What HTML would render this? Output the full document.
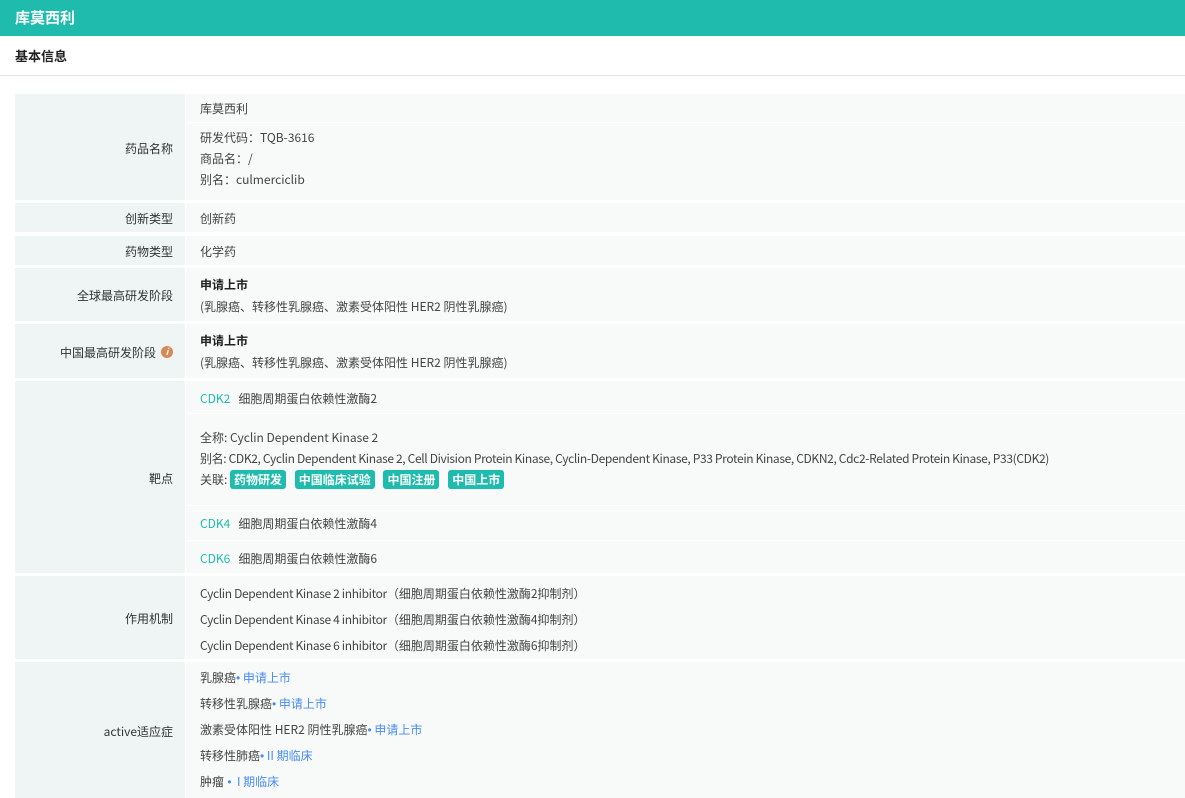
<!DOCTYPE html>
<html><head><meta charset="utf-8"><style>
*{margin:0;padding:0;box-sizing:border-box}
body{width:1185px;height:798px;overflow:hidden;background:#fff;font-family:"Noto Sans CJK SC","Liberation Sans",sans-serif;font-size:12px;color:#444;position:relative}
.top{position:absolute;left:0;top:0;width:1185px;height:36px;background:#1fbcae;color:#fff;font-weight:bold;font-size:15px;line-height:36px;padding-left:15px}
.sec{position:absolute;left:0;top:36px;width:1185px;height:40px;border-bottom:1px solid #e6e6e6;font-weight:bold;font-size:13px;color:#222;line-height:40px;padding-left:15px}
.l{position:absolute;left:15px;width:170px;background:#eef5f4;text-align:right;padding-right:12px;color:#333;display:flex;align-items:center;justify-content:flex-end;padding-top:2px}
.v{position:absolute;left:186px;width:999px;background:#f8fafa}
.t{position:absolute;left:200px;white-space:nowrap;line-height:16px}
.line{position:absolute;left:186px;width:999px;height:1px;background:#fff}
.c{color:#1fbcae}
.b{color:#4a8cf0}
.d{font-family:"Liberation Sans",sans-serif;color:#4a8cf0}
.n{letter-spacing:-0.35px}
.tag{display:inline-block;background:#1fbcae;color:#fff;font-weight:bold;border-radius:3px;padding:0 4px;line-height:19px;margin-right:6px}
</style></head><body>
<div class="top">库莫西利</div>
<div class="sec">基本信息</div>

<div class="l" style="top:94px;height:106px">药品名称</div>
<div class="v" style="top:94px;height:106px"></div>
<div class="line" style="top:122px"></div>
<div class="t" style="top:101px">库莫西利</div>
<div class="t" style="top:130px">研发代码：TQB-3616</div>
<div class="t" style="top:151px">商品名：/</div>
<div class="t" style="top:172px">别名：culmerciclib</div>

<div class="l" style="top:203px;height:29px">创新类型</div>
<div class="v" style="top:203px;height:29px"></div>
<div class="t" style="top:211px">创新药</div>

<div class="l" style="top:236px;height:29px">药物类型</div>
<div class="v" style="top:236px;height:29px"></div>
<div class="t" style="top:244px">化学药</div>

<div class="l" style="top:268px;height:53px">全球最高研发阶段</div>
<div class="v" style="top:268px;height:53px"></div>
<div class="t" style="top:277px;font-weight:bold;color:#222">申请上市</div>
<div class="t" style="top:299px">(乳腺癌、转移性乳腺癌、激素受体阳性 HER2 阴性乳腺癌)</div>

<div class="l" style="top:324px;height:54px">中国最高研发阶段<span style="display:inline-block;width:12px;height:12px;border-radius:6px;background:#d9885a;color:#fff;font-size:9px;font-style:italic;font-weight:bold;text-align:center;line-height:12px;margin-left:5px">i</span></div>
<div class="v" style="top:324px;height:54px"></div>
<div class="t" style="top:333px;font-weight:bold;color:#222">申请上市</div>
<div class="t" style="top:355px">(乳腺癌、转移性乳腺癌、激素受体阳性 HER2 阴性乳腺癌)</div>

<div class="l" style="top:381px;height:192px">靶点</div>
<div class="v" style="top:381px;height:192px"></div>
<div class="line" style="top:413px"></div>
<div class="line" style="top:505px"></div>
<div class="line" style="top:540px"></div>
<div class="t" style="top:391px"><span class="c">CDK2</span>&nbsp;&nbsp; 细胞周期蛋白依赖性激酶2</div>
<div class="t" style="top:430px">全称:&nbsp;Cyclin Dependent Kinase 2</div>
<div class="t n" style="top:451px">别名:&nbsp;CDK2, Cyclin Dependent Kinase 2, Cell Division Protein Kinase, Cyclin-Dependent Kinase, P33 Protein Kinase, CDKN2, Cdc2-Related Protein Kinase, P33(CDK2)</div>
<div class="t" style="top:470px;line-height:20px">关联:&nbsp;<span class="tag">药物研发</span> <span class="tag">中国临床试验</span> <span class="tag">中国注册</span> <span class="tag">中国上市</span></div>
<div class="t" style="top:516px"><span class="c">CDK4</span>&nbsp;&nbsp; 细胞周期蛋白依赖性激酶4</div>
<div class="t" style="top:551px"><span class="c">CDK6</span>&nbsp;&nbsp; 细胞周期蛋白依赖性激酶6</div>

<div class="l" style="top:576px;height:83px">作用机制</div>
<div class="v" style="top:576px;height:83px"></div>
<div class="t" style="top:586px"><span class="n">Cyclin Dependent Kinase 2 inhibitor</span>（细胞周期蛋白依赖性激酶2抑制剂）</div>
<div class="t" style="top:612px"><span class="n">Cyclin Dependent Kinase 4 inhibitor</span>（细胞周期蛋白依赖性激酶4抑制剂）</div>
<div class="t" style="top:638px"><span class="n">Cyclin Dependent Kinase 6 inhibitor</span>（细胞周期蛋白依赖性激酶6抑制剂）</div>

<div class="l" style="top:662px;height:136px">active适应症</div>
<div class="v" style="top:662px;height:136px"></div>
<div class="t" style="top:670px">乳腺癌<span class="d">•</span><span class="b"> 申请上市</span></div>
<div class="t" style="top:696px">转移性乳腺癌<span class="d">•</span><span class="b"> 申请上市</span></div>
<div class="t" style="top:722px">激素受体阳性 HER2 阴性乳腺癌<span class="d">•</span><span class="b"> 申请上市</span></div>
<div class="t" style="top:748px">转移性肺癌<span class="d">•</span><span class="b"> II 期临床</span></div>
<div class="t" style="top:774px">肿瘤<span class="d"> •</span><span class="b">&nbsp;&nbsp;I 期临床</span></div>
</body></html>
